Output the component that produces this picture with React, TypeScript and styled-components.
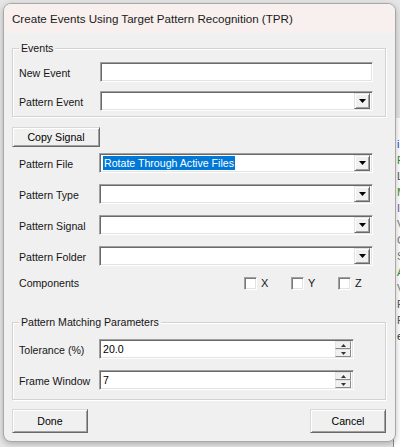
import React from 'react';
import styled, { createGlobalStyle } from 'styled-components';

const GlobalStyle = createGlobalStyle`
  html, body { margin: 0; padding: 0; background: #e6e6e6; }
  body { font-family: "Liberation Sans", Arial, sans-serif; }
  * { box-sizing: border-box; }
`;

const Desktop = styled.div`
  position: relative;
  width: 400px;
  height: 447px;
  overflow: hidden;
  background: #e6e6e6;
`;

const BackWindow = styled.div`
  position: absolute;
  left: 393px;
  top: 118px;
  width: 12px;
  height: 329px;
  background: #fff;
  border-left: 1px solid #8a8a8a;
  padding: 18px 0 0 3px;
  display: flex;
  flex-direction: column;
`;

const BackGlyph = styled.span<{ $c: string }>`
  font-size: 11px;
  line-height: 16px;
  color: ${(p) => p.$c};
`;

const Dialog = styled.div`
  position: absolute;
  left: 3px;
  top: 3px;
  width: 393px;
  height: 439px;
  border: 1px solid #a8a8a8;
  border-radius: 8px;
  background: #f0f0f0;
  box-shadow: 0 2px 6px rgba(0, 0, 0, 0.25);
  display: flex;
  flex-direction: column;
  overflow: hidden;
`;

const TitleBar = styled.div`
  height: 29px;
  flex: none;
  background: #f7f0ee;
  display: flex;
  align-items: center;
  padding-left: 8px;
  font-size: 11.6px;
  color: #1a1a1a;
`;

const Body = styled.div`
  flex: 1;
  display: flex;
  flex-direction: column;
  padding: 15px 9px 9px 8px;
  font-size: 10.6px;
  color: #151515;
`;

const GroupBox = styled.div<{ $pt: number; $pb: number; $pr: number }>`
  position: relative;
  width: 374px;
  border: 1px solid #d2d2d2;
  box-shadow: inset 1px 1px 0 #fff, 1px 1px 0 #fff;
  padding: ${(p) => `${p.$pt}px ${p.$pr}px ${p.$pb}px 6px`};
`;

const GroupLegend = styled.span`
  position: absolute;
  top: -7px;
  left: 6px;
  padding: 0 2px;
  background: #f0f0f0;
  line-height: 13px;
`;

const FieldGrid = styled.div<{ $label: number; $gap: number }>`
  display: grid;
  grid-template-columns: ${(p) => p.$label}px 1fr;
  row-gap: ${(p) => p.$gap}px;
  align-items: center;
`;

const Label = styled.span`
  line-height: 13px;
  padding-top: 2px;
  white-space: nowrap;
`;

const Sunken = styled.div`
  position: relative;
  height: 20px;
  background: #fff;
  border: 1px solid;
  border-color: #a0a0a0 #fff #fff #a0a0a0;
  box-shadow: inset 1px 1px 0 #696969, inset -1px -1px 0 #e3e3e3;
  padding: 2px;
  display: flex;
  align-items: center;
  color: #000;
`;

const EditText = styled.span`
  flex: 1;
  padding-left: 1px;
  line-height: 14px;
`;

const Selected = styled.span`
  margin-left: 1px;
  padding: 0 1px;
  line-height: 14px;
  background: #0078d7;
  color: #fff;
`;

const Spacer = styled.span`
  flex: 1;
`;

const DropButton = styled.div`
  width: 16px;
  height: 16px;
  flex: none;
  margin-top: -2px;
  margin-bottom: -2px;
  background: #f0f0f0;
  border: 1px solid;
  border-color: #e3e3e3 #696969 #696969 #e3e3e3;
  box-shadow: inset 1px 1px 0 #fff, inset -1px -1px 0 #a0a0a0;
  display: flex;
  align-items: center;
  justify-content: center;
`;

const SpinColumn = styled.div`
  width: 16px;
  height: 16px;
  flex: none;
  display: flex;
  flex-direction: column;
`;

const SpinHalf = styled.div`
  height: 8px;
  background: #f0f0f0;
  border: 1px solid;
  border-color: #e3e3e3 #8a8a8a #8a8a8a #e3e3e3;
  display: flex;
  align-items: center;
  justify-content: center;
`;

const RaisedButton = styled.button<{ $w: number; $h: number }>`
  width: ${(p) => p.$w}px;
  height: ${(p) => p.$h}px;
  padding: 0;
  margin: 0;
  font-family: inherit;
  font-size: 10.6px;
  color: #000;
  background: #f0f0f0;
  border: 1px solid;
  border-color: #d8d8d8 #696969 #696969 #d8d8d8;
  box-shadow: inset 1px 1px 0 #fff, inset -1px -1px 0 #a0a0a0;
  border-radius: 0;
`;

const CopyWrap = styled.div`
  margin-top: 10px;
`;

const MainFields = styled.div`
  margin-top: 6px;
  padding: 0 13px 0 7px;
`;

const ComponentsRow = styled.div`
  margin-top: 11px;
  padding-left: 7px;
  height: 13px;
  display: flex;
  align-items: center;
`;

const ComponentsLabel = styled.span`
  width: 225px;
  line-height: 13px;
`;

const CheckItem = styled.label`
  width: 47px;
  display: flex;
  align-items: center;
  gap: 4px;
  line-height: 13px;
  font-size: 11px;
`;

const CheckBox = styled.span`
  width: 13px;
  height: 13px;
  background: #fff;
  border: 1px solid;
  border-color: #a0a0a0 #fff #fff #a0a0a0;
  box-shadow: inset 1px 1px 0 #7a7a7a, inset -1px -1px 0 #e3e3e3;
`;

const ParamsWrap = styled.div`
  margin-top: 32px;
`;

const ButtonRow = styled.div`
  margin-top: 9px;
  display: flex;
  justify-content: space-between;
`;

const DownArrow = () => (
  <svg width="7" height="4" viewBox="0 0 7 4">
    <polygon points="0,0 7,0 3.5,4" fill="#000" />
  </svg>
);

const TinyArrow = ({ up }: { up?: boolean }) => (
  <svg width="5" height="3" viewBox="0 0 5 3">
    <polygon points={up ? '2.5,0 5,3 0,3' : '0,0 5,0 2.5,3'} fill="#333" />
  </svg>
);

const Combo = ({ children }: { children?: React.ReactNode }) => (
  <Sunken>
    {children ?? <Spacer />}
    <DropButton>
      <DownArrow />
    </DropButton>
  </Sunken>
);

const Spin = ({ value }: { value: string }) => (
  <Sunken>
    <EditText>{value}</EditText>
    <SpinColumn>
      <SpinHalf>
        <TinyArrow up />
      </SpinHalf>
      <SpinHalf>
        <TinyArrow />
      </SpinHalf>
    </SpinColumn>
  </Sunken>
);

const backGlyphs: [string, string][] = [
  ['i', '#2a3fd0'],
  ['P', '#2f8f2f'],
  ['L', '#555'],
  ['M', '#2f8f2f'],
  ['I', '#7a5aa0'],
  ['V', '#777'],
  ['C', '#777'],
  ['S', '#777'],
  ['A', '#2f8f2f'],
  ['V', '#777'],
  ['F', '#555'],
  ['F', '#555'],
  ['e', '#333'],
];

export default function App() {
  return (
    <>
      <GlobalStyle />
      <Desktop>
        <BackWindow>
          {backGlyphs.map(([g, c], i) => (
            <BackGlyph key={i} $c={c}>
              {g}
            </BackGlyph>
          ))}
        </BackWindow>
        <Dialog>
          <TitleBar>Create Events Using Target Pattern Recognition (TPR)</TitleBar>
          <Body>
            <GroupBox $pt={13} $pb={5} $pr={12}>
              <GroupLegend>Events</GroupLegend>
              <FieldGrid $label={81} $gap={9}>
                <Label>New Event</Label>
                <Sunken>
                  <EditText />
                </Sunken>
                <Label>Pattern Event</Label>
                <Combo />
              </FieldGrid>
            </GroupBox>

            <CopyWrap>
              <RaisedButton $w={88} $h={20}>
                Copy Signal
              </RaisedButton>
            </CopyWrap>

            <MainFields>
              <FieldGrid $label={80} $gap={11}>
                <Label>Pattern File</Label>
                <Combo>
                  <Selected>Rotate Through Active Files</Selected>
                  <Spacer />
                </Combo>
                <Label>Pattern Type</Label>
                <Combo />
                <Label>Pattern Signal</Label>
                <Combo />
                <Label>Pattern Folder</Label>
                <Combo />
              </FieldGrid>
            </MainFields>

            <ComponentsRow>
              <ComponentsLabel>Components</ComponentsLabel>
              <CheckItem>
                <CheckBox />X
              </CheckItem>
              <CheckItem>
                <CheckBox />Y
              </CheckItem>
              <CheckItem>
                <CheckBox />Z
              </CheckItem>
            </ComponentsRow>

            <ParamsWrap>
              <GroupBox $pt={16} $pb={9} $pr={31}>
                <GroupLegend>Pattern Matching Parameters</GroupLegend>
                <FieldGrid $label={80} $gap={11}>
                  <Label>Tolerance (%)</Label>
                  <Spin value="20.0" />
                  <Label>Frame Window</Label>
                  <Spin value="7" />
                </FieldGrid>
              </GroupBox>
            </ParamsWrap>

            <ButtonRow>
              <RaisedButton $w={76} $h={24}>
                Done
              </RaisedButton>
              <RaisedButton $w={76} $h={24}>
                Cancel
              </RaisedButton>
            </ButtonRow>
          </Body>
        </Dialog>
      </Desktop>
    </>
  );
}
